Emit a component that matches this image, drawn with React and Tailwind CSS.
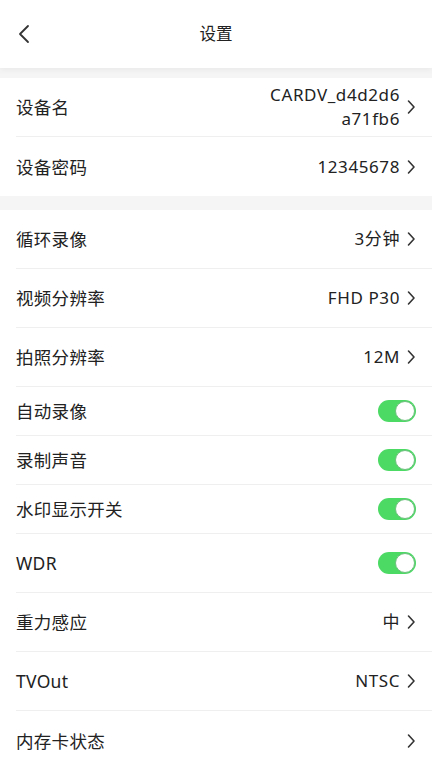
import React from 'react';

const font = { fontFamily: '"Noto Sans", "Noto Sans CJK SC", sans-serif' };

function Chevron() {
  return (
    <svg width="10" height="16" viewBox="0 0 10 16" className="ml-[6px] shrink-0">
      <path d="M2.5 2 L8 8 L2.5 14" fill="none" stroke="#333" strokeWidth="1.6" strokeLinecap="round" strokeLinejoin="round" />
    </svg>
  );
}

function Toggle() {
  return (
    <div className="w-[38px] h-[22px] rounded-full bg-[#4cd964] flex items-center justify-end pr-[1px]">
      <div className="w-[20px] h-[20px] rounded-full bg-white border border-[#6fbf7f]" />
    </div>
  );
}

function Row({ label, value, toggle, tall = true, last, chevron = true }) {
  return (
    <div className="pl-4 bg-white">
      <div className={`flex items-center justify-between pr-4 ${tall ? 'h-[59px]' : 'h-[49px]'} ${last ? '' : 'border-b border-[#efefef]'}`}>
        <span className="text-[17.5px] leading-[24px] text-[#222] tracking-[0.3px]">{label}</span>
        {toggle ? (
          <Toggle />
        ) : (
          <div className="flex items-center">
            {value && <span className="text-[17px] leading-[24px] text-[#222] text-right tracking-[0.6px]">{value}</span>}
            {chevron && <Chevron />}
          </div>
        )}
      </div>
    </div>
  );
}

export default function App() {
  return (
    <div className="w-[432px] h-[768px] bg-[#f5f5f5] overflow-hidden" style={font}>
      {/* Header */}
      <div className="relative h-[68px] bg-white flex items-center justify-center shadow-[0_2px_6px_rgba(0,0,0,0.05)]">
        <svg width="14" height="20" viewBox="0 0 14 20" className="absolute left-[17px] top-[24px]">
          <path d="M11 2 L3 10 L11 18" fill="none" stroke="#333" strokeWidth="1.8" strokeLinecap="round" strokeLinejoin="round" />
        </svg>
        <span className="text-[16.5px] text-[#222]">设置</span>
      </div>

      {/* Device */}
      <div className="mt-[10px] bg-white">
        <div className="pl-4">
          <div className="flex items-center justify-between pr-4 h-[59px] border-b border-[#efefef]">
            <span className="text-[17.5px] leading-[24px] text-[#222] tracking-[0.3px]">设备名</span>
            <div className="flex items-center">
              <span className="text-[17px] leading-[24px] text-[#222] text-right tracking-[0.6px]">CARDV_d4d2d6<br />a71fb6</span>
              <Chevron />
            </div>
          </div>
        </div>
        <Row label="设备密码" value="12345678" last />
      </div>

      {/* Settings */}
      <div className="mt-[14px] bg-white">
        <Row label="循环录像" value="3分钟" />
        <Row label="视频分辨率" value="FHD P30" />
        <Row label="拍照分辨率" value="12M" />
        <Row label="自动录像" toggle tall={false} />
        <Row label="录制声音" toggle tall={false} />
        <Row label="水印显示开关" toggle tall={false} />
        <Row label="WDR" toggle />
        <Row label="重力感应" value="中" />
        <Row label="TVOut" value="NTSC" />
        <Row label="内存卡状态" last />
      </div>
    </div>
  );
}
